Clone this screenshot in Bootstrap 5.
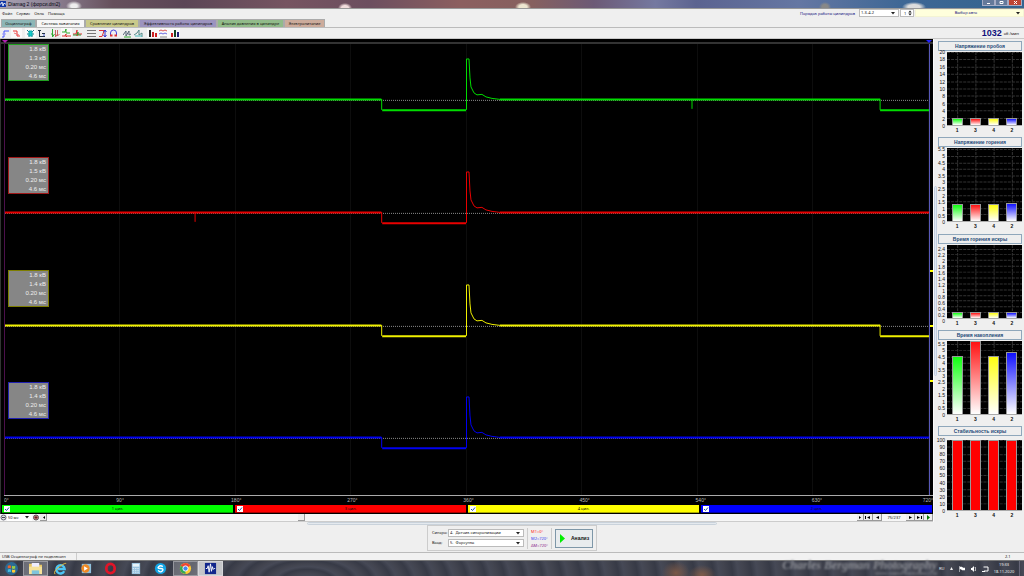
<!DOCTYPE html>
<html lang="ru">
<head>
<meta charset="utf-8">
<meta name="viewport" content="width=device-width, initial-scale=1">
<title>Diamag 2</title>
<link href="https://cdn.jsdelivr.net/npm/bootstrap@5.3.0/dist/css/bootstrap.min.css" rel="stylesheet">
<style>
:root{--arial:"Liberation Sans",sans-serif}
body{font:4px/7px "Noto Sans",sans-serif;color:#111;background:#efefef;overflow-x:hidden}
button,select,input{font:inherit;color:inherit;margin:0}
button{border:0;background:none;padding:0}
a{color:inherit;text-decoration:none}
svg{display:block}
.navy{color:#10107c}
.titlebar{height:9px;font:5px/8px var(--arial);border-bottom:1px solid #999;color:#050510;
 background:radial-gradient(ellipse 8px 5px at 74px 6px,#eee 0 40%,transparent),radial-gradient(ellipse 7px 5px at 345px 8px,#f2dcdc 0 50%,transparent),radial-gradient(ellipse 8px 5px at 523px 7px,#eee6d0 0 50%,transparent),radial-gradient(ellipse 6px 5px at 825px 7px,#888 0 50%,transparent),radial-gradient(ellipse 12px 5px at 914px 7px,#ddd 0 50%,transparent),
 linear-gradient(90deg,#a9a3b4 0,#8d8294 5%,#66505c 11%,#5b4656 18%,#765461 28%,#6c4e5f 36%,#8c5f5f 45%,#86605f 52%,#6c5a76 58%,#7579a0 64%,#5b6390 68%,#6577a3 78%,#3e6795 88%,#33638f)}
.winbtn{width:13px;height:6px;border:1px solid #a5abc4;border-top:0;background:#65799a;color:#fff;line-height:4px}
.winbtn.shut{background:#bd4433;width:14px}
.menurow{height:10px;line-height:9px}
.combo{appearance:none;height:8px;line-height:6px;padding:0 8px 0 1px;border:1px solid #bbb;border-radius:0;background:#fff url("data:image/svg+xml,%3Csvg xmlns='http://www.w3.org/2000/svg' viewBox='0 0 4 3'%3E%3Cpath d='M0 0h4L2 2.4z' fill='%23222'/%3E%3C/svg%3E") no-repeat right 3px center/4px 3px}
.combo.auto{background-color:#ffffdc;border-color:#f4f4d4;text-align:center;width:109px}
.spin{appearance:none;width:14px;height:8px;line-height:6px;margin:0 1px;padding:0 6px 0 3px;border:1px solid #bbb;border-radius:0;background:#fff url("data:image/svg+xml,%3Csvg xmlns='http://www.w3.org/2000/svg' viewBox='0 0 4 7'%3E%3Cpath d='M0 3h4L2 .5zM0 4h4L2 6.500z' fill='%23222'/%3E%3C/svg%3E") no-repeat right 1px center/4px 6px}
.tabrow{height:9px;border-bottom:1px solid #bbb;padding-left:1px}
.tabrow .tb{height:8px;border:1px solid #aaa;border-bottom:0;text-align:center;white-space:nowrap;line-height:7px}
.tools{height:11px;border-bottom:1px solid #c8c8c8;gap:3px}
.tools button{width:11px;height:10px}
.tools button.on{background:#fafafa}
.tools svg{width:9px;height:9px;margin:auto;fill:none;stroke-width:1}
.rpm{font:bold 9px/10px var(--arial)}
.scope{background:#000;border-left:1px solid #333;min-width:0}
.topline{height:2px;margin-top:3px;background:#333}
.plot{margin:0 3px 0 3px;border-left:1px solid #4b104b;border-right:1px solid #5858b8;background:repeating-linear-gradient(90deg,transparent 0 calc(12.5% - 1px),#0d0d0d calc(12.5% - 1px) 12.5%)}
.flagl,.flagr{top:-4px;border:3px solid transparent;border-top-color:#b020b0;border-bottom:0}
.flagl{left:-3px}.flagr{right:-3px;border-top-color:#2222ff}
.chan{flex:1 1 112px;min-height:60px}
.chan svg{width:100%;height:100%;fill:none}
.chan path,.chan line{vector-effect:non-scaling-stroke}
.readout{left:3px;top:0;width:41px;height:37px;padding-right:2px;background:#868686;border:1px solid;color:#eee;text-align:right;font:6px/9px var(--arial)}
.tick3{right:-4px;width:3px;height:2px;background:#ff0}
.axis{height:9px;border-top:1px solid #aaa;margin:0 0 0 3px;color:#bbb;font:5px/9px var(--arial);overflow:hidden}
.axis span{width:30px;margin-right:-15px;margin-left:-15px;text-align:center}
.axis span:first-child{text-align:left;margin-left:0;margin-right:-30px}
.axis span:last-child{text-align:right;margin-left:-30px;margin-right:0}
.cyls{height:10px;gap:2px;padding:1px}
.cyls label{flex:1;background:var(--c);line-height:8px;text-align:center;color:#111;position:relative;border-bottom:1px solid #0005}
.tick{appearance:none;width:6px;height:6px;background:#fff url("data:image/svg+xml,%3Csvg xmlns='http://www.w3.org/2000/svg' viewBox='0 0 6 6'%3E%3Cpath d='M1 3l1.5 1.5L5 1.5' fill='none' stroke='%2325a'/%3E%3C/svg%3E");position:absolute;left:2px;top:1px}
.scrollrow{height:8px;background:#f6f6f6;border-bottom:1px solid #ccc;line-height:7px;margin-left:-1px}
.scrollrow button{height:7px;width:9px;background:#eee;border-right:1px solid #999;border-bottom:1px solid #999;color:#000}
.scrollrow button svg,.winbtn svg{margin:auto}
.split{width:5px;background:#eee;border-left:1px solid #fafafa}
.split div{width:3px;height:190px;background:#dfe7f2;border:1px solid #c3cfdf;border-radius:2px}
.side{width:86px;padding:2px 2px 0 0}
.gauge{height:96px}
.cap{height:10px;border:1px solid #8fa7bb;background:#eee;width:100%;font:bold 5px/8px var(--arial);color:#1f4a78}
.ylab{width:9px;height:80px;margin:-3px 0;text-align:right;padding-right:2px;font:5px/6px var(--arial)}
.ylab div{margin-left:-3px}
.area{height:74px;background:#000;padding:0 1px;border-bottom:1px solid #aaa}
.area svg{left:0;top:0;width:100%;height:100%}
.gauge:last-child .ylab{height:77px}
.gauge:last-child .area{height:71px}
.bar{width:11px;border:1px solid #999;border-bottom:0;position:relative;background:linear-gradient(var(--c),#fff)}
.bar.full{background:#f00}
.xlab{margin-left:9px;padding:0 1px;font:bold 5px/9px var(--arial)}
.xlab span{width:11px;text-align:center}
.hsplit{height:3px;width:40%;background:#e4e9ee;border:1px solid #c9d2db;border-radius:2px}
.box{border:1px solid #ccc;height:26px;padding:2px 3px 2px 4px;gap:3px}
.box .combo{width:76px}
.fields{grid-template-columns:16px 76px;row-gap:2px;line-height:8px}
.marks{width:25px;padding-left:3px;border:solid #ccc;border-width:0 1px}
.go{width:38px;height:19px;gap:6px;padding-left:4px;border:1px solid #7e97a8;background:#e8ecee;font:bold 5px/8px var(--arial)}
.status{height:8px;border-top:1px solid #bbb;line-height:7px;background:#f1f1f1}
.taskbar{height:16px;color:#eee;border-top:1px solid #777;background:
 radial-gradient(ellipse 14px 10px at 702px 14px,#7d5a48,transparent),radial-gradient(ellipse 14px 12px at 676px 12px,#7a5847,transparent),
 repeating-radial-gradient(ellipse 19px 9px at 30% 140%,#42444f 0,#373a46 40%,#464956 70%,#42444f 100%)}
.taskbar .app{width:25px;height:15px}
.taskbar .app.open{background:#ffffff38;border:1px solid #ffffff50}
.taskbar .app svg{width:13px;height:13px;margin:auto}
.sign{font:italic bold 12px/8px "Liberation Serif",serif;color:#8b8d94;text-align:right;filter:blur(1px);white-space:nowrap}
.sign small{font:4px/4px var(--arial);display:block;padding-top:3px}
</style>
</head>
<body class="d-flex flex-column min-vh-100">
<header class="titlebar d-flex align-items-start">
 <svg style="margin:1px 2px 0 0" width="6" height="6" viewBox="0 0 6 6"><path fill="#1238a8" d="M0 0h6v6H0z"/><path d="M0 3h1l1-2 1 4 1-3 1 1h1" stroke="#fff" fill="none" stroke-width=".8"/></svg>
 <span>Diamag 2 (форси.dm2)</span>
 <div class="ms-auto d-flex" style="padding-right:2px">
  <button class="winbtn" aria-label="Свернуть"><svg width="5" height="5"><path d="M1 3h3v1H1z" fill="#fff"/></svg></button>
  <button class="winbtn" aria-label="Развернуть"><svg width="5" height="5"><path d="M1 1.500h3v2H1z" fill="none" stroke="#fff"/></svg></button>
  <button class="winbtn shut" aria-label="Закрыть"><svg width="5" height="5"><path d="M1 1l3 3M4 1L1 4" stroke="#fff"/></svg></button>
 </div>
</header>
<div class="menurow d-flex align-items-start">
 <nav class="d-flex" style="gap:4px;padding-left:2px"><a href="#">Файл</a><a href="#">Сервис</a><a href="#">Окна</a><a href="#">Помощь</a></nav>
 <label class="ms-auto navy" for="order" style="padding-right:4px">Порядок работы цилиндров</label>
 <select id="order" class="combo" style="width:40px"><option>1-3-4-2</option></select>
 <input class="spin" type="text" inputmode="numeric" value="1" aria-label="Цилиндр">
 <select class="combo auto navy" aria-label="Авто"><option>Выбор авто</option></select>
</div>
<nav class="tabrow d-flex">
 <button class="tb" style="width:35px;background:#8cb6b6">Осциллограф</button>
 <button class="tb" style="width:49px;background:#f7f7f7">Система зажигания</button>
 <button class="tb" style="width:54px;background:#c9c98a">Сравнение цилиндров</button>
 <button class="tb" style="width:78px;background:#9c93bf">Эффективность работы цилиндров</button>
 <button class="tb" style="width:67px;background:#91bb89">Анализ давления в цилиндре</button>
 <button class="tb" style="width:41px;background:#ccab9b">Электропитание</button>
</nav>
<div class="tools d-flex">
 <div class="d-flex">
  <button aria-label="Фронт"><svg viewBox="0 0 9 9"><path d="M1 8h2V2h5" stroke="#45f"/><path d="M1 5h4" stroke="#99f"/></svg></button>
  <button class="on" aria-label="Спад"><svg viewBox="0 0 9 9"><path d="M1 2h4v5h3" stroke="#e33"/><path d="M2 4l5 2" stroke="#e77"/></svg></button>
 </div><div class="d-flex">
  <button class="on" aria-label="Свеча"><svg viewBox="0 0 9 9"><path d="M1 1l2 2M8 1L6 3M1 5h7M3 8V6M6 8V6" stroke="#178"/><path d="M3 2h3v5H3z" fill="#1cc" stroke="#1aa"/></svg></button>
  <button aria-label="Масштаб"><svg viewBox="0 0 9 9"><path d="M1 1.500h3M2.500 2v6M3 7.500h5M5 4.500h3" stroke="#234"/><path d="M6 6h2" stroke="#45c"/></svg></button>
 </div><div class="d-flex">
  <button aria-label="Два сигнала"><svg viewBox="0 0 9 9"><path d="M0 5h1.500V0v8l2-3" stroke="#3a3"/><path d="M4.500 1v7l2-3V1v6l2-2" stroke="#c66"/></svg></button>
  <button class="on" aria-label="Разделить"><svg viewBox="0 0 9 9"><path d="M0 3h3l1-3v4h4" stroke="#3a3"/><path d="M0 7h3l1-2v3l1-1h4" stroke="#d33"/></svg></button>
  <button aria-label="Наложить"><svg viewBox="0 0 9 9"><path d="M0 5h3l1-4v6l1-2h4" stroke="#d33"/><path d="M0 6h4l1-3v3h3" stroke="#393"/></svg></button>
 </div><div class="d-flex">
  <button aria-label="Линии"><svg viewBox="0 0 9 9"><path d="M0 1.500h9M0 4.500h9M0 7.500h9" stroke="#777"/></svg></button>
  <button aria-label="Курсоры"><svg viewBox="0 0 9 9"><path d="M1 1.500h5M1 7.500h3L6 2" stroke="#d33"/><path d="M7 1v7M5.500 3L7 1l1.500 2M5.500 6L7 8l1.500-2" stroke="#33c"/></svg></button>
  <button aria-label="Наушники"><svg viewBox="0 0 9 9"><path d="M1.500 6V4a3 3 0 016 0v2" stroke="#44d"/><path d="M1 6.500h2.500M5.500 6.500H8" stroke="#d33" stroke-width="2"/></svg></button>
 </div><div class="d-flex">
  <button aria-label="Анализ А"><svg viewBox="0 0 9 9"><path d="M0 6l3-4v5l3-5v4l2-1" stroke="#567"/><path d="M1 8h7" stroke="#3a3"/></svg></button>
  <button aria-label="Анализ Б"><svg viewBox="0 0 9 9"><path d="M0 6l3-2 2-3v5l3-2v4" stroke="#588"/><path d="M1 7h7" stroke="#4bb"/></svg></button>
 </div><div class="d-flex">
  <button class="on" aria-label="Гистограмма"><svg viewBox="0 0 9 9"><path d="M2 8V1" stroke="#222" stroke-width="2"/><path d="M5 8V3M8 8V4" stroke="#c22" stroke-width="2"/></svg></button>
  <button class="on" aria-label="Графики"><svg viewBox="0 0 9 9"><path d="M0 2l2-1 2 1 2-1 2 1" stroke="#d55"/><path d="M0 5l2-1 2 1 2-1 2 1" stroke="#66d"/><path d="M1 8h7" stroke="#888"/></svg></button>
  <button class="on" aria-label="Столбцы"><svg viewBox="0 0 9 9"><path d="M2 8V4" stroke="#c22" stroke-width="2"/><path d="M5 8V1" stroke="#142" stroke-width="2"/><path d="M8 8V3" stroke="#227" stroke-width="2"/></svg></button>
 </div>
 <div class="ms-auto d-flex" style="gap:2px;padding-right:5px"><span class="rpm navy">1032</span><span style="line-height:12px">об /мин</span></div>
</div>

<main class="d-flex flex-fill">
 <section class="scope d-flex flex-column flex-fill">
  <div class="topline"></div>
  <div class="plot d-flex flex-column flex-fill position-relative" id="plot">
   <i class="flagl position-absolute"></i><i class="flagr position-absolute"></i>
   <i class="tick3 position-absolute" style="top:50.2%"></i><i class="tick3 position-absolute" style="top:62.4%"></i><i class="tick3 position-absolute" style="top:74.6%"></i>
  </div>
  <div class="axis d-flex justify-content-between"><span>0°</span><span>90°</span><span>180°</span><span>270°</span><span>360°</span><span>450°</span><span>540°</span><span>630°</span><span>720°</span></div>
  <div class="cyls d-flex">
   <label style="--c:#0f0"><input type="checkbox" class="tick" checked>1 цил.</label>
   <label style="--c:#f00"><input type="checkbox" class="tick" checked>3 цил.</label>
   <label style="--c:#ff0"><input type="checkbox" class="tick" checked>4 цил.</label>
   <label style="--c:#00f"><input type="checkbox" class="tick" checked>2 цил.</label>
  </div>
  <div class="scrollrow d-flex align-items-start">
   <svg width="7" height="7" viewBox="0 0 7 7"><circle cx="3.500" cy="3.500" r="2.500" fill="#ddd" stroke="#667"/><path d="M2 3.500h3" stroke="#445"/></svg>
   <select class="combo border-0" style="width:25px;height:7px" aria-label="Развёртка"><option>50 мс</option></select>
   <svg width="8" height="7" viewBox="0 0 8 7"><circle cx="4" cy="3.500" r="2.500" fill="#d88" stroke="#555"/><path d="M2.500 3.500h3M4 2v3" stroke="#622"/></svg>
   <button style="width:7px" aria-label="Влево"><svg width="5" height="5"><path d="M4 1v3L2 2.500z"/></svg></button>
   <div style="flex:251"></div><button style="width:7px" aria-label="Прокрутка"></button><div style="flex:551"></div>
   <button style="width:7px" aria-label="Вправо"><svg width="4" height="5"><path d="M1 1v3l2-1.500z"/></svg></button>
   <button aria-label="В начало"><svg width="6" height="5"><path d="M0 1h1v3H0zM5 1v3L2 2.500z"/></svg></button>
   <button aria-label="Назад"><svg width="5" height="5"><path d="M4 1v3L1 2.500z"/></svg></button>
   <span class="text-center" style="width:24px">75/237</span>
   <button aria-label="Вперёд"><svg width="5" height="5"><path d="M1 1v3l3-1.500z"/></svg></button>
   <button aria-label="В конец"><svg width="6" height="5"><path d="M5 1h1v3H5zM1 1v3l3-1.500z"/></svg></button>
   <button aria-label="Пуск"><svg width="5" height="5"><path d="M1 0v5l3-2.500z" fill="#070"/></svg></button>
  </div>
 </section>
 <div class="split d-flex align-items-center"><div></div></div>
 <aside class="side d-flex flex-column justify-content-between" id="side"></aside>
</main>

<section class="d-flex flex-column align-items-center" style="height:30px">
 <div class="hsplit"></div>
 <form class="box d-flex align-items-center">
  <div class="fields d-grid">
   <label for="sync">Синхро:</label><select id="sync" class="combo"><option>4.&nbsp; Датчик синхронизации</option></select>
   <label for="inp">Вход:</label><select id="inp" class="combo"><option>5.&nbsp; Форсунка</option></select>
  </div>
  <div class="marks"><div style="color:#f22">М1=0°</div><div style="color:#33e">М2=720°</div><div style="color:#828">ΔМ=720°</div></div>
  <button type="button" class="go d-flex align-items-center"><svg width="5" height="9"><path d="M0 0v9l5-4.500z" fill="#0e0"/></svg>Анализ</button>
 </form>
</section>
<footer class="status d-flex"><span style="width:77px;padding-left:2px;border-right:1px solid #ccc;white-space:nowrap">USB Осциллограф не подключен</span><span class="ms-auto" style="width:19px">2.1</span></footer>

<div class="taskbar d-flex" style="padding-right:1px">
 <button class="app" style="width:23px" aria-label="Пуск"><svg viewBox="0 0 14 14"><circle cx="7" cy="7" r="7" fill="#2b6a94"/><path d="M3 4q2-1 3.500 0v3Q5 6 3 7z" fill="#e8622c"/><path d="M7.500 4q2 1 3.500 0v3q-2 1-3.500 0z" fill="#9c4"/><path d="M3 8q2-1 3.500 0v3Q5 10 3 11z" fill="#4bd"/><path d="M7.500 8q2 1 3.500 0v3q-2 1-3.500 0z" fill="#fc3"/></svg></button>
 <button class="app open" aria-label="Проводник"><svg viewBox="0 0 14 14"><path d="M0 2h5l1 1h8v10H0z" fill="#e9c765"/><path d="M3 1h8v5H3z" fill="#eef"/><path d="M0 5h14v8H0z" fill="#f6e29a"/><path d="M3 9h8v4H3z" fill="#7ec4dc"/></svg></button>
 <button class="app" aria-label="Internet Explorer"><svg viewBox="0 0 14 14"><path d="M11 10A4.500 4.500 0 1111.500 7.500H4" fill="none" stroke="#4cc5f5" stroke-width="2.500"/><path d="M1 13Q-1 10 6 5t7-3" fill="none" stroke="#f4c63c"/></svg></button>
 <button class="app" aria-label="Проигрыватель"><svg viewBox="0 0 14 14"><path d="M3 2h10v10H3z" fill="#8fc0dd"/><circle cx="7" cy="7" r="4.500" fill="#f08a24"/><path d="M5.500 4.500v5l4-2.500z" fill="#fff"/></svg></button>
 <button class="app" aria-label="Opera"><svg viewBox="0 0 14 14"><ellipse cx="7" cy="7" rx="4.500" ry="5" fill="none" stroke="#e01528" stroke-width="3"/></svg></button>
 <button class="app" aria-label="Калькулятор"><svg viewBox="0 0 14 14"><path d="M3 1h9v12H3z" fill="#9ac4e0"/><path d="M4 2h7v3H4z" fill="#e6f4fa"/><path d="M4 7h7M4 9h7M4 11h7" stroke="#dceaf4" stroke-dasharray="1.500 1"/></svg></button>
 <button class="app" aria-label="Skype"><svg viewBox="0 0 14 14"><circle cx="7" cy="7" r="6" fill="#12a5e6"/><path d="M9.500 5Q7 3 5 5t2 2 2 2.500T4.500 9" fill="none" stroke="#fff" stroke-width="1.500"/></svg></button>
 <button class="app open" aria-label="Chrome"><svg viewBox="0 0 14 14"><circle cx="7" cy="7" r="6" fill="#fc3"/><path d="M7 7L1.800 4A6 6 0 0112.200 4z" fill="#e43"/><path d="M7 7L1.800 4A6 6 0 007 13z" fill="#3a5"/><circle cx="7" cy="7" r="2.800" fill="#48e" stroke="#fff"/></svg></button>
 <button class="app open" style="background:#ffffffb0" aria-label="Diamag"><svg viewBox="0 0 14 14"><path d="M1 1h12v12H1z" fill="#12268c"/><path d="M2 7h1.500l1-3 1 7 1.500-9 1 8 1-5 1 3 1-1h1" fill="none" stroke="#fff"/></svg></button>
 <div class="ms-auto sign">Charles Bergman Photography<small>WWW.CHARLESBERGMAN.COM</small></div>
 <div class="d-flex align-items-center" style="gap:6px;padding-left:2px;width:52px"><span>RU</span><svg width="3" height="3"><path d="M0 3l1.500-3L3 3z" fill="#eee"/></svg>
  <svg width="6" height="6"><path d="M.500 0v6M1 1h2l1 1h2v2H3L2 3H1z" stroke="#fff" stroke-width=".5" fill="#fff"/></svg><svg width="5" height="6"><path d="M0 2h1l2-2v6L1 4H0z" fill="#fff"/><path d="M4 1q2 2 0 4" stroke="#ddd" fill="none"/></svg><svg width="7" height="6"><path d="M1.500 1H6v4H2M0 5.500h3" stroke="#fff" fill="none"/></svg></div>
 <div class="text-center" style="width:30px">19:33<br>18.11.2020</div>
 <button style="width:4px;border-left:1px solid #667" aria-label="Показать рабочий стол"></button>
</div>

<script>
// Ignition traces: baseline runs (thick) and transients (thin), 926 units across 720 degrees
const channels = [
  {c:'#00dc00', b:'#20a020', r:['1.8 кВ','1.3 кВ','0.20 мс','4.6 мс'], glitch:688, end:true},
  {c:'#e80000', b:'#a01818', r:['1.8 кВ','1.5 кВ','0.20 мс','4.6 мс'], glitch:190},
  {c:'#f0f000', b:'#7d7d00', r:['1.8 кВ','1.4 кВ','0.20 мс','4.6 мс'], end:true},
  {c:'#0000f0', b:'#2020b0', r:['1.8 кВ','1.4 кВ','0.20 мс','4.6 мс']}];
channels.forEach(k => {
  const base = `M0 55.500H377M378 66.500H462M496 55.500H${k.end ? '877M877 66.500H926' : '926'}`;
  const thin = `M377.500 55V66M462.500 66V15H465L466 34L467 43L470 49L473 51L478 50.500L482 53L488 54.500L496 55.500` +
    (k.glitch ? `M${k.glitch + .5} 55V65` : '') + (k.end ? 'M877 55V66' : '');
  document.getElementById('plot').insertAdjacentHTML('beforeend',
   `<div class="chan position-relative"><svg viewBox="0 0 926 113" preserveAspectRatio="none">
    <line x1="0" x2="926" y1="56.5" y2="56.5" stroke="#888" stroke-dasharray="1 1"/>
    <path d="${base}" stroke="${k.c}" stroke-width="2"/><path d="${thin}" stroke="${k.c}"/></svg>
    <div class="readout position-absolute" style="border-color:${k.b}">${k.r.map(t => `<div>${t}</div>`).join('')}</div></div>`);
});
// Side gauges: axis top, tick step, bar values
const cyl = ['1','3','4','2'], col = ['#1f1','#f11','#ff1','#11f'];
[['Напряжение пробоя',20,2,[1.8,1.8,1.8,1.8]],
 ['Напряжение горения',5.6,.5,[1.3,1.3,1.3,1.4]],
 ['Время горения искры',2.52,.2,[.2,.2,.2,.2]],
 ['Время накопления',5.7,.5,[4.5,5.7,4.5,4.8]],
 ['Стабильность искры',100,10,[100,100,100,100]]].forEach(([name,max,step,vals], n) => {
  const ticks = [];
  for (let i = Math.floor(max / step + .001); i >= 0; i--) ticks.push(+(i * step).toFixed(1));
  const pad = Math.round((1 - ticks[0] / max) * 74);
  const grid = ticks.map(t => `<path d="M0 ${Math.round(74 - t / max * 74)}.500H74"/>`).join('') + [10,28,46,64].map(x => `<path d="M${x}.500 0V74"/>`).join('');
  document.getElementById('side').insertAdjacentHTML('beforeend',
   `<div class="gauge"><button class="cap d-block">${name}</button>
    <div class="d-flex" style="padding-top:${n == 4 ? 4 : 1}px">
     <div class="ylab d-flex flex-column justify-content-between" style="padding-top:${pad}px">${ticks.map(t => `<div>${t}</div>`).join('')}</div>
     <div class="area flex-fill position-relative d-flex justify-content-around align-items-end">
      <svg class="position-absolute" viewBox="0 0 74 74" preserveAspectRatio="none" stroke="#333" stroke-dasharray="3 1">${grid}</svg>
      ${vals.map((v, i) => `<div class="bar ${n == 4 ? 'full' : ''}" style="height:${Math.round(v / max * 100)}%;--c:${col[i]}"></div>`).join('')}
     </div></div>
    <div class="xlab d-flex justify-content-around">${cyl.map(t => `<span>${t}</span>`).join('')}</div></div>`);
});
</script>
<script src="https://cdn.jsdelivr.net/npm/bootstrap@5.3.0/dist/js/bootstrap.bundle.min.js"></script>
</body>
</html>
